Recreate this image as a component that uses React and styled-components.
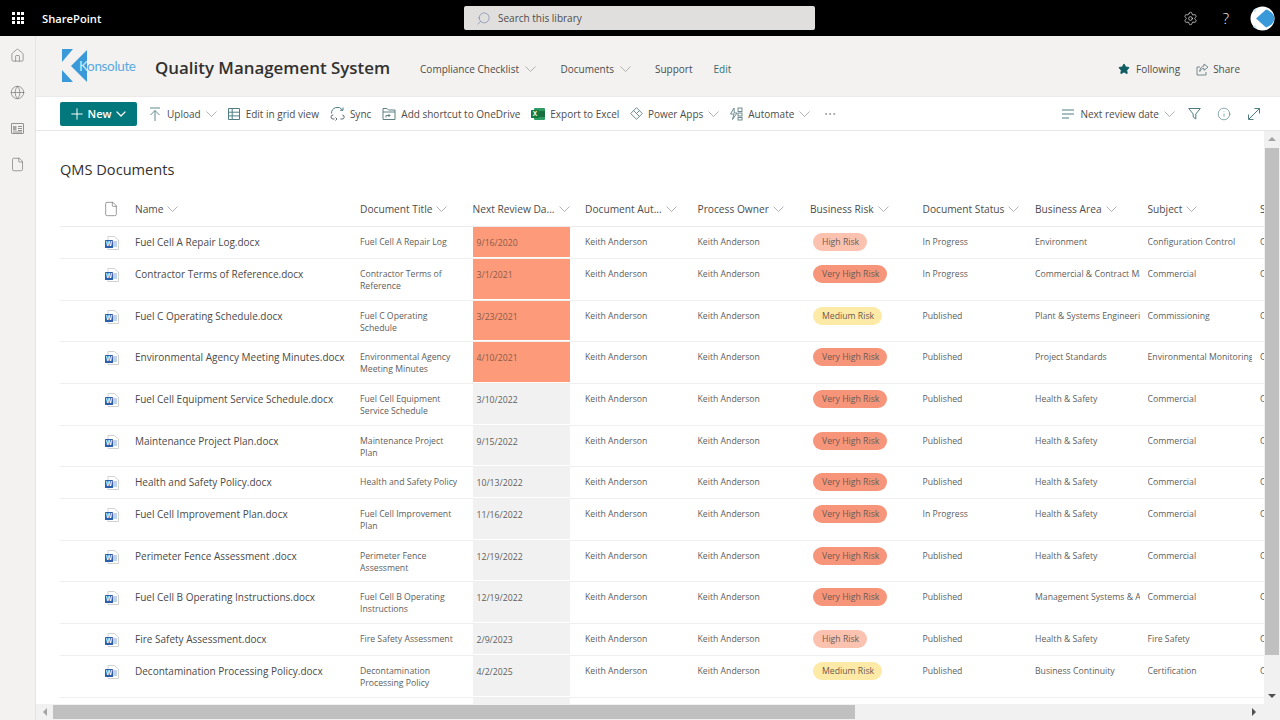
import React from 'react'
import styled, { createGlobalStyle } from 'styled-components'
import { Home, Globe, File, ChevronDown, Plus, Star, Info, Ellipsis, Search, Settings } from 'lucide-react'

const GlobalStyle = createGlobalStyle`
  html, body { margin: 0; padding: 0; height: 100%; overflow: hidden; }
  body { font-family: "Open Sans", "Liberation Sans", sans-serif; color: #323130; background: #fff; }
  * { box-sizing: border-box; }
`

const Page = styled.div`
  width: 1280px;
  height: 720px;
  display: flex;
  flex-direction: column;
  overflow: hidden;
`

const TopBar = styled.header`
  height: 36px;
  flex: none;
  background: #000;
  color: #fff;
  display: grid;
  grid-template-columns: 464px 351px 1fr;
  align-items: center;
`

const Brand = styled.div`
  display: flex;
  align-items: center;
  gap: 18px;
  padding-left: 12px;
  font-size: 11.2px;
  font-weight: 600;
`

const Waffle = styled.div`
  display: grid;
  grid-template-columns: repeat(3, 3px);
  gap: 1.5px;
  & > i { width: 3px; height: 3px; background: #fff; }
`

const SearchBox = styled.div`
  height: 24px;
  background: #e1dfdd;
  border-radius: 2px;
  display: flex;
  align-items: center;
  gap: 7px;
  padding-left: 12px;
  color: #4d4c4b;
  font-size: 10px;
`

const TopActions = styled.div`
  display: flex;
  align-items: center;
  justify-content: flex-end;
`

const TopAction = styled.div`
  width: 36px;
  display: flex;
  justify-content: center;
  color: #f3f2f1;
  font-size: 15px;
  font-weight: 300;
`

const Body = styled.div`
  flex: 1;
  min-height: 0;
  display: flex;
`

const Rail = styled.nav`
  width: 36px;
  flex: none;
  background: #f3f2f1;
  border-right: 1px solid #e5e3e1;
  display: flex;
  flex-direction: column;
  align-items: center;
  padding-top: 11.5px;
  gap: 22px;
  color: #6b6a68;
`

const Main = styled.main`
  flex: 1;
  min-width: 0;
  display: flex;
  flex-direction: column;
`

const SiteHeader = styled.div`
  height: 61px;
  flex: none;
  background: #f3f2f1;
  border-bottom: 1px solid #eaeaea;
  display: flex;
  align-items: center;
  padding: 0 40px 0 24px;
`

const SiteTitle = styled.h1`
  margin: 2px 30px 0 17px;
  font-size: 16.9px;
  font-weight: 600;
  color: #323130;
  white-space: nowrap;
`

const SiteNav = styled.div`
  display: flex;
  align-items: center;
  padding-top: 6px;
  font-size: 10px;
  color: #4d4c4b;
  flex: 1;
`

const NavItem = styled.span`
  display: inline-flex;
  align-items: center;
  gap: 6px;
  margin-right: ${p => p.$gap}px;
  color: ${p => (p.$accent ? '#2f6f75' : 'inherit')};
  white-space: nowrap;
`

const Follow = styled.div`
  display: flex;
  align-items: center;
  gap: ${p => p.$gap}px;
  margin-left: 16px;
  padding-top: 6px;
  font-size: 10px;
  color: #4d4c4b;
`

const CommandBar = styled.div`
  height: 34px;
  flex: none;
  background: #fff;
  border-bottom: 1px solid #e8e7e6;
  display: flex;
  align-items: center;
  padding: 0 19px 0 24px;
  font-size: 10px;
  color: #4d4c4b;
`

const NewButton = styled.div`
  width: 77px;
  height: 24px;
  margin-right: 11px;
  border-radius: 2px;
  background: #03787c;
  color: #fff;
  display: flex;
  align-items: center;
  justify-content: center;
  gap: 2px;
  font-size: 11px;
  font-weight: 600;
`

const Command = styled.div`
  display: flex;
  align-items: center;
  gap: 5px;
  margin-right: ${p => p.$gap}px;
  white-space: nowrap;
  color: inherit;
  & > svg { flex: none; }
`

const Spacer = styled.div`
  flex: 1;
`

const ContentRow = styled.div`
  flex: 1;
  min-height: 0;
  display: flex;
`

const Content = styled.section`
  flex: 1;
  min-width: 0;
  overflow: hidden;
  padding: 26px 0 0 24px;
`

const LibraryTitle = styled.h2`
  margin: 0 0 11px;
  height: 24px;
  line-height: 24px;
  font-size: 14.6px;
  font-weight: 400;
  color: #323130;
`

const Table = styled.div`
  width: 1300px;
`

const Columns = `
  display: grid;
  grid-template-columns: 75px 225px 112.5px 112.5px 112.5px 112.5px 112.5px 112.5px 112.5px 112.5px 112.5px;
`

const HeaderRow = styled.div`
  ${Columns}
  height: 35px;
  align-items: center;
  border-bottom: 1px solid #edebe9;
  font-size: 10.2px;
  color: #4d4c4b;
`

const HeaderCell = styled.div`
  display: flex;
  align-items: center;
  gap: 4px;
  white-space: nowrap;
  overflow: hidden;
`

const HeaderIcon = styled.div`
  display: flex;
  padding-left: 43px;
`

const Row = styled.div`
  ${Columns}
  height: ${p => p.$height}px;
  border-bottom: 1px solid #f0efee;
`

const IconCell = styled.div`
  display: flex;
  align-items: flex-start;
  padding: 9px 0 0 45px;
`

const NameCell = styled.div`
  padding-top: 8px;
  font-size: 10px;
  line-height: 15px;
  color: #4a4948;
  white-space: nowrap;
  overflow: hidden;
`

const FieldCell = styled.div`
  margin-right: ${p => (p.$wrap ? 12 : 8)}px;
  padding-top: 9px;
  font-size: 8.7px;
  line-height: 12px;
  color: #605e5c;
  overflow: hidden;
  white-space: ${p => (p.$wrap ? 'normal' : 'nowrap')};
`

const DateCell = styled.div`
  width: 97px;
  margin-bottom: 1px;
  padding: 10px 0 0 4px;
  font-size: 8.7px;
  line-height: 12px;
  color: ${p => (p.$overdue ? '#8a5a48' : '#605e5c')};
  background: ${p => (p.$overdue ? '#fd9a7a' : '#f1f1f1')};
`

const RISK_COLOURS = {
  'High Risk': '#fbc2b0',
  'Very High Risk': '#f7957a',
  'Medium Risk': '#fdeaa6',
}

const RiskPill = styled.span`
  display: inline-block;
  height: 18px;
  line-height: 18px;
  margin: 6px 0 0 3px;
  padding: 0 8px 0 9px;
  border-radius: 9px;
  font-size: 8.7px;
  white-space: nowrap;
  color: #6b5a52;
  background: ${p => RISK_COLOURS[p.$risk]};
`

const ScrollBarV = styled.div`
  width: 16px;
  flex: none;
  background: #f1f1f1;
  display: flex;
  flex-direction: column;
  align-items: center;
`

const ScrollThumbV = styled.div`
  width: 14px;
  height: 507px;
  margin-bottom: auto;
  background: #c0c0c0;
`

const ScrollBarH = styled.div`
  height: 16px;
  flex: none;
  background: #f1f1f1;
  display: flex;
  align-items: center;
  padding-right: 16px;
`

const ScrollThumbH = styled.div`
  width: 802px;
  height: 14px;
  margin-right: auto;
  background: #c0c0c0;
`

const Arrow = styled.i`
  width: 0;
  height: 0;
  flex: none;
  border: 4px solid transparent;
  ${p => p.$dir === 'up' && 'border-top: 0; border-bottom: 4px solid #a3a3a3; margin: 6px 0 7px;'}
  ${p => p.$dir === 'down' && 'border-bottom: 0; border-top: 4px solid #505050; margin: 0 0 6px;'}
  ${p => p.$dir === 'left' && 'border-left: 0; border-right: 4px solid #a3a3a3; margin: 0 6px 0 7px;'}
  ${p => p.$dir === 'right' && 'border-right: 0; border-left: 4px solid #505050; margin: 0 8px 0 0;'}
`

const Chevron = () => (
  <svg width="11" height="6" viewBox="0 0 11 6" fill="none" stroke="#a19f9d" strokeWidth=".8">
    <path d="M.5.5l5 5 5-5" />
  </svg>
)

const WordIcon = () => (
  <svg width="14" height="14" viewBox="0 0 14 14">
    <path d="M3 .5h6.5L13.5 4v9.5H3z" fill="#fff" stroke="#c8c6c4" strokeWidth=".8" />
    <path d="M8 6h4M8 8h4M8 10h4" stroke="#7ea6d8" strokeWidth="1" />
    <rect x="0" y="4" width="8" height="8" rx=".6" fill="#2b5fab" />
    <text x="4" y="10.3" fontSize="6.5" fontWeight="700" textAnchor="middle" fill="#fff" fontFamily="Liberation Sans">W</text>
  </svg>
)

const ExcelIcon = () => (
  <svg width="14" height="14" viewBox="0 0 14 14">
    <rect x="3" y="1" width="11" height="12" rx="1" fill="#2f9b62" />
    <rect x="8" y="4" width="6" height="6" fill="#1a6e40" />
    <rect x="0" y="3" width="8" height="8" rx=".6" fill="#107c41" />
    <text x="4" y="9.4" fontSize="6.5" fontWeight="700" textAnchor="middle" fill="#fff" fontFamily="Liberation Sans">X</text>
  </svg>
)

const UploadIcon = () => (
  <svg width="14" height="14" viewBox="0 0 14 14" fill="none" stroke="#5f8a8e" strokeWidth="1">
    <path d="M2 1h10M7 14V3.5M2.5 8 7 3.5 11.5 8" />
  </svg>
)

const GridIcon = () => (
  <svg width="14" height="14" viewBox="0 0 14 14" fill="none" stroke="#4e7d83" strokeWidth="1">
    <path d="M1.5 1.5h11v11h-11zM1.5 5.2h11M1.5 8.9h11M5.2 1.5v11" />
  </svg>
)

const SyncIcon = () => (
  <svg width="15" height="15" viewBox="0 0 15 15" fill="none" stroke="#4e7d83" strokeWidth="1">
    <path d="M1.5 7.5A6 6 0 0 1 12.5 4" />
    <path d="M13 1.5V4.3H10.2" />
    <path d="M4.5 13H3a2 2 0 0 1 0-4h.4M10.5 13H12a2 2 0 0 0 .4-4" stroke="#5f6b6d" />
    <path d="M5.5 11.5 7 13l-1.5 1.5" stroke="#5f6b6d" />
  </svg>
)

const ShortcutIcon = () => (
  <svg width="14" height="14" viewBox="0 0 14 14" fill="none" stroke="#5f7f84" strokeWidth="1">
    <path d="M1 3V1.5h4L6.5 3H13v9.5H1z" />
    <path d="M1 5h12" />
    <path d="M4 10.5V8.5h4M6.5 7 8 8.5 6.5 10" />
  </svg>
)

const PowerAppsIcon = () => (
  <svg width="13" height="13" viewBox="0 0 13 13" fill="none" stroke="#5f7f84" strokeWidth=".9">
    <path d="M6.5.7 12.3 6.5 6.5 12.3.7 6.5z" />
    <path d="M3.6 3.6 9.4 9.4M9.4 3.6 6.5 6.5" />
  </svg>
)

const AutomateIcon = () => (
  <svg width="14" height="14" viewBox="0 0 14 14" fill="none" stroke="#5f7f84" strokeWidth=".9">
    <path d="M5 1 1.5 7H5L3.5 12.5 8 6H5.3z" />
    <rect x="9" y="1" width="4" height="3.5" />
    <rect x="9" y="6" width="4" height="3" />
    <rect x="9" y="10.5" width="4" height="2.5" />
  </svg>
)

const ShareIcon = () => (
  <svg width="13" height="13" viewBox="0 0 13 13" fill="none" stroke="#6a8086" strokeWidth=".9">
    <path d="M4 4H1v8h9V9" />
    <path d="M8 1l4 3.2L8 7.4V5.4C6 5.4 4.5 6.5 3.8 8.6 3.8 5.5 5.5 3.2 8 3z" />
  </svg>
)

const SortIcon = () => (
  <svg width="13" height="10" viewBox="0 0 13 10" fill="none" stroke="#4e7d83" strokeWidth="1">
    <path d="M0 1h12M0 5h12M0 9h7" />
  </svg>
)

const FilterIcon = () => (
  <svg width="13" height="13" viewBox="0 0 13 13" fill="none" stroke="#4e7d83" strokeWidth="1">
    <path d="M.7 1.5h11.600L7.800 7v5L5.200 10V7z" />
  </svg>
)

const ExpandIcon = () => (
  <svg width="14" height="14" viewBox="0 0 14 14" fill="none" stroke="#4e7d83" strokeWidth="1">
    <path d="M2 12 12.5 1.5M7.5 1.5h5v5M1.5 7.5v5h5" />
  </svg>
)

const NewsIcon = () => (
  <svg width="13" height="13" viewBox="0 0 13 13" fill="none" stroke="#7a7977" strokeWidth=".8">
    <rect x=".5" y="1.5" width="12" height="10" rx=".5" />
    <rect x="2" y="4" width="3.5" height="4.5" fill="#a8a6a4" stroke="none" />
    <path d="M7 4.5h4M7 6.5h4M7 8.5h4M2 10h9" />
  </svg>
)

const Logo = () => (
  <svg width="78" height="36" viewBox="0 0 78 36">
    <path d="M2 1H13L2 14z" fill="#3a9ad9" />
    <path d="M2 22 13 34H2z" fill="#3a9ad9" />
    <path d="M11 18 27 2V34z" fill="#3a9ad9" />
    <text x="19" y="22.5" fontSize="13.5" fontFamily="Lato, Liberation Sans, sans-serif" fill="#5aa9de" textLength="57">
      <tspan fill="#d5ebf8">K</tspan>onsolute
    </text>
  </svg>
)

const Avatar = () => (
  <svg width="25" height="25" viewBox="0 0 25 25">
    <circle cx="12.5" cy="12.5" r="12" fill="#fff" />
    <path d="M6 12.5 16 3.5C20 4.5 24 8 24.5 12.5 24 17 20 20.5 16 21.5z" fill="#3a9ad9" />
    <path d="M3 4 7.5 1.5 5 6.5zM3 21 7.5 23.5 5 18.5z" fill="#cfe6f5" />
  </svg>
)

const COMMANDS_LEFT = [
  { label: 'Upload', icon: <UploadIcon />, caret: true, gap: 10 },
  { label: 'Edit in grid view', icon: <GridIcon />, gap: 11 },
  { label: 'Sync', icon: <SyncIcon />, gap: 11 },
  { label: 'Add shortcut to OneDrive', icon: <ShortcutIcon />, gap: 11 },
  { label: 'Export to Excel', icon: <ExcelIcon />, gap: 10.5 },
  { label: 'Power Apps', icon: <PowerAppsIcon />, caret: true, gap: 10 },
  { label: 'Automate', icon: <AutomateIcon />, caret: true, gap: 13 },
]

const KEITH = 'Keith Anderson'

const ROWS = [
  { name: 'Fuel Cell A Repair Log.docx', title: 'Fuel Cell A Repair Log', date: '9/16/2020', overdue: true, risk: 'High Risk', status: 'In Progress', area: 'Environment', subject: 'Configuration Control', height: 32 },
  { name: 'Contractor Terms of Reference.docx', title: 'Contractor Terms of Reference', date: '3/1/2021', overdue: true, risk: 'Very High Risk', status: 'In Progress', area: 'Commercial & Contract Management', subject: 'Commercial', height: 42 },
  { name: 'Fuel C Operating Schedule.docx', title: 'Fuel C Operating Schedule', date: '3/23/2021', overdue: true, risk: 'Medium Risk', status: 'Published', area: 'Plant & Systems Engineering', subject: 'Commissioning', height: 41 },
  { name: 'Environmental Agency Meeting Minutes.docx', title: 'Environmental Agency Meeting Minutes', date: '4/10/2021', overdue: true, risk: 'Very High Risk', status: 'Published', area: 'Project Standards', subject: 'Environmental Monitoring', height: 42 },
  { name: 'Fuel Cell Equipment Service Schedule.docx', title: 'Fuel Cell Equipment Service Schedule', date: '3/10/2022', risk: 'Very High Risk', status: 'Published', area: 'Health & Safety', subject: 'Commercial', height: 41.5 },
  { name: 'Maintenance Project Plan.docx', title: 'Maintenance Project Plan', date: '9/15/2022', risk: 'Very High Risk', status: 'Published', area: 'Health & Safety', subject: 'Commercial', height: 41.5 },
  { name: 'Health and Safety Policy.docx', title: 'Health and Safety Policy', date: '10/13/2022', risk: 'Very High Risk', status: 'Published', area: 'Health & Safety', subject: 'Commercial', height: 32 },
  { name: 'Fuel Cell Improvement Plan.docx', title: 'Fuel Cell Improvement Plan', date: '11/16/2022', risk: 'Very High Risk', status: 'In Progress', area: 'Health & Safety', subject: 'Commercial', height: 41.5 },
  { name: 'Perimeter Fence Assessment .docx', title: 'Perimeter Fence Assessment', date: '12/19/2022', risk: 'Very High Risk', status: 'Published', area: 'Health & Safety', subject: 'Commercial', height: 41.5 },
  { name: 'Fuel Cell B Operating Instructions.docx', title: 'Fuel Cell B Operating Instructions', date: '12/19/2022', risk: 'Very High Risk', status: 'Published', area: 'Management Systems & Assurance', subject: 'Commercial', height: 41.5 },
  { name: 'Fire Safety Assessment.docx', title: 'Fire Safety Assessment', date: '2/9/2023', risk: 'High Risk', status: 'Published', area: 'Health & Safety', subject: 'Fire Safety', height: 32 },
  { name: 'Decontamination Processing Policy.docx', title: 'Decontamination Processing Policy', date: '4/2/2025', risk: 'Medium Risk', status: 'Published', area: 'Business Continuity', subject: 'Certification', height: 42 },
]

const HEADERS = ['Name', 'Document Title', 'Next Review Da...', 'Document Aut...', 'Process Owner', 'Business Risk', 'Document Status', 'Business Area', 'Subject', 'Site']

export default function App() {
  return (
    <Page>
      <GlobalStyle />
      <TopBar>
        <Brand>
          <Waffle>{Array.from({ length: 9 }, (_, i) => <i key={i} />)}</Waffle>
          SharePoint
        </Brand>
        <SearchBox>
          <Search size={15} color="#6d7fa8" strokeWidth={1} style={{ transform: 'scaleX(-1)' }} />
          Search this library
        </SearchBox>
        <TopActions>
          <TopAction><Settings size={15} strokeWidth={1.1} /></TopAction>
          <TopAction>?</TopAction>
          <TopAction><Avatar /></TopAction>
        </TopActions>
      </TopBar>
      <Body>
        <Rail>
          <Home size={15} strokeWidth={1} />
          <Globe size={15} strokeWidth={1} />
          <NewsIcon />
          <File size={15} strokeWidth={1} />
        </Rail>
        <Main>
          <SiteHeader>
            <Logo />
            <SiteTitle>Quality Management System</SiteTitle>
            <SiteNav>
              <NavItem $gap={24.5}>Compliance Checklist <Chevron /></NavItem>
              <NavItem $gap={24}>Documents <Chevron /></NavItem>
              <NavItem $gap={21}>Support</NavItem>
              <NavItem $accent>Edit</NavItem>
            </SiteNav>
            <Follow $gap={6}><Star size={12} fill="#0f5c63" color="#0f5c63" />Following</Follow>
            <Follow $gap={4}><ShareIcon />Share</Follow>
          </SiteHeader>
          <CommandBar>
            <NewButton>
              <Plus size={18} strokeWidth={1.3} />
              New
              <ChevronDown size={16} strokeWidth={1.8} />
            </NewButton>
            {COMMANDS_LEFT.map(c => (
              <Command key={c.label} $gap={c.gap}>
                {c.icon}
                {c.label}
                {c.caret && <Chevron />}
              </Command>
            ))}
            <Ellipsis size={14} color="#77757a" strokeWidth={1} />
            <Spacer />
            <Command $gap={13}><SortIcon />Next review date<Chevron /></Command>
            <Command $gap={15.5}><FilterIcon /></Command>
            <Command $gap={16.5}><Info size={14} color="#4e7d83" strokeWidth={1.1} /></Command>
            <ExpandIcon />
          </CommandBar>
          <ContentRow>
            <Content>
              <LibraryTitle>QMS Documents</LibraryTitle>
              <Table>
                <HeaderRow>
                  <HeaderIcon><File size={16} color="#6b6a68" strokeWidth={1} /></HeaderIcon>
                  {HEADERS.map(h => (
                    <HeaderCell key={h}>{h}{h !== 'Site' && <Chevron />}</HeaderCell>
                  ))}
                </HeaderRow>
                {ROWS.map(r => (
                  <Row key={r.name} $height={r.height}>
                    <IconCell><WordIcon /></IconCell>
                    <NameCell>{r.name}</NameCell>
                    <FieldCell $wrap>{r.title}</FieldCell>
                    <DateCell $overdue={r.overdue}>{r.date}</DateCell>
                    <FieldCell>{KEITH}</FieldCell>
                    <FieldCell>{KEITH}</FieldCell>
                    <div><RiskPill $risk={r.risk}>{r.risk}</RiskPill></div>
                    <FieldCell>{r.status}</FieldCell>
                    <FieldCell>{r.area}</FieldCell>
                    <FieldCell>{r.subject}</FieldCell>
                    <FieldCell>Commercial</FieldCell>
                  </Row>
                ))}
                <Row $height={32}>
                  <div />
                  <div />
                  <div />
                  <DateCell />
                </Row>
              </Table>
            </Content>
            <ScrollBarV>
              <Arrow $dir="up" />
              <ScrollThumbV />
              <Arrow $dir="down" />
            </ScrollBarV>
          </ContentRow>
          <ScrollBarH>
            <Arrow $dir="left" />
            <ScrollThumbH />
            <Arrow $dir="right" />
          </ScrollBarH>
        </Main>
      </Body>
    </Page>
  )
}
